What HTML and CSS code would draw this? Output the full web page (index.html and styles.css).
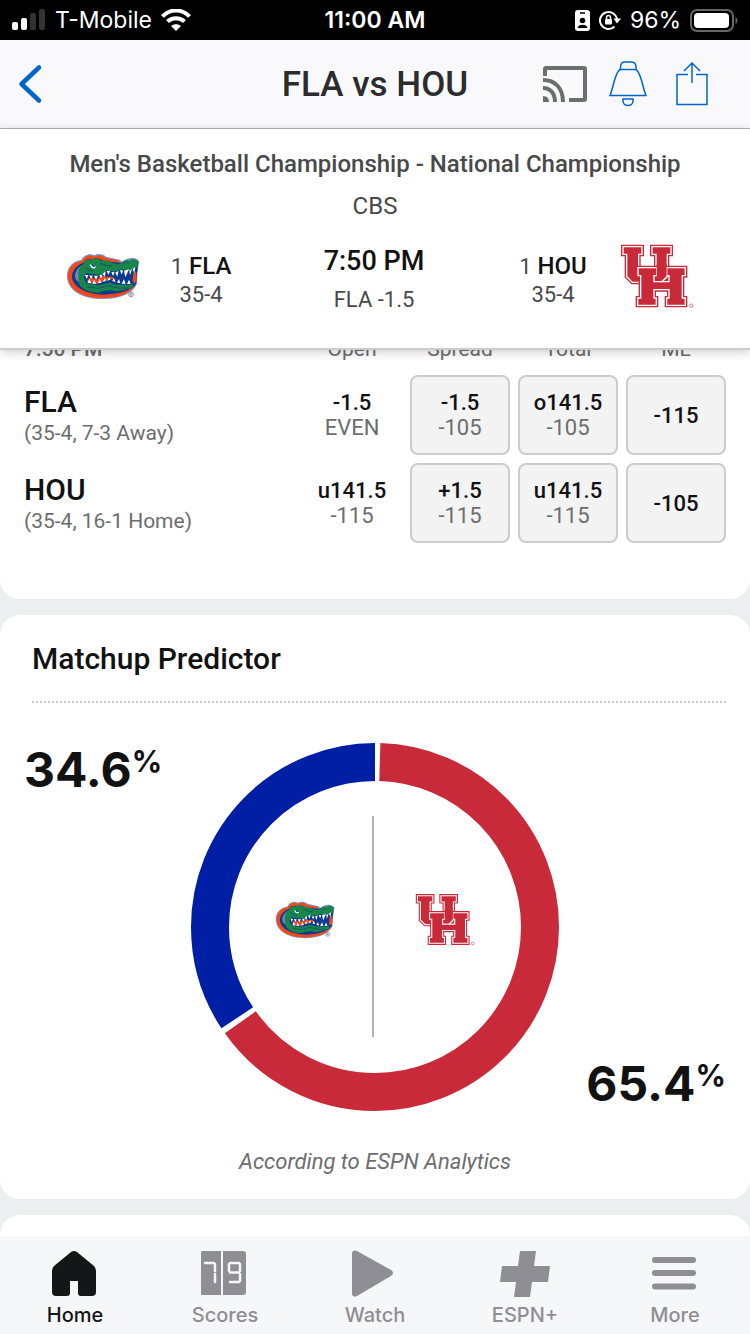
FILE: index.html
```html
<!DOCTYPE html>
<html lang="en">
<head>
    <meta charset="UTF-8">
    <meta name="viewport" content="width=device-width, initial-scale=1.0">
    <title>FLA vs HOU</title>
    <link rel="stylesheet" href="styles.css">
</head>
<body>
    <!-- shared logos -->
    <svg class="defs" width="0" height="0" aria-hidden="true">
        <symbol id="gators" viewBox="48 68 222 144">
            <path d="M51 142C50 112 71 94 94 92C101 77 119 70 133 78C146 71 160 75 168 82L209 91L216 97C230 86 246 82 262 90L268 97L262 128L261 163C250 190 215 209 158 209C98 209 53 184 51 142Z" fill="#7f8fbd"/>
            <path d="M54 142C53 114 74 97 96 95C103 80 119 74 133 82C146 75 159 79 167 86L208 94V100L150 98L105 103C85 112 73 124 74 144C76 169 112 192 160 193C203 194 240 184 258 164C244 191 208 206 158 206C100 206 56 182 54 142Z" fill="#fa4616"/>
            <path d="M66 143C66 122 82 105 102 100C104 91 117 86 127 91C140 83 152 88 160 95L208 100L265 95L258 165C236 187 207 195 160 196C106 195 68 172 66 143Z" fill="#0b3a92"/>
            <path d="M75 144C74 128 83 115 96 108L87 130L90 160C81 156 76 151 75 144Z" fill="#6f86bb"/>
            <path d="M85 134C84 118 92 108 102 103C103 92 114 87 124 93C133 84 146 85 152 94L167 93C181 97 192 105 209 104C221 96 228 88 239 94C246 86 258 88 264 97L263 112L237 124L215 120L192 127L170 123L156 137L125 134L108 131L101 143L110 163L146 168L178 160L200 166L238 166L250 160L247 172C233 182 217 182 198 186C178 180 160 184 145 190C117 189 92 179 86 160Z" fill="#188646"/>
            <path d="M118 105L138 111L134 118L124 115Z" fill="#fff"/>
            <path d="M125 105L137 111L133 113L126 111Z" fill="#0b3a92"/>
            <path d="M106 137L124 137L158 140L175 127L192 131L212 125L235 129L254 116L256 163L240 165L217 162L199 159L178 152L147 163L114 163L103 150Z" fill="#0b3a92"/>
            <path d="M110 153L125 143L139 151L153 139L170 142L187 142L199 153L183 148L159 156L143 163L119 161Z" fill="#fa4616"/>
            <path d="M250 132L259 128V156L252 163L248 154Z" fill="#fa4616"/>
            <path d="M105 136L115 138L110 149ZM118 138L128 139L123 150ZM132 139L144 139L138 151ZM148 138L157 136L154 148ZM158 134L167 126L165 142ZM170 125L180 124L176 137ZM184 128L194 129L189 140ZM196 130L206 124L202 142ZM210 123L219 123L215 136ZM222 124L237 120L226 144ZM238 124L246 119L240 138ZM248 118L256 113L253 133ZM112 161L118 148L124 162ZM127 163L132 151L139 163ZM144 162L149 149L155 160ZM158 157L165 145L168 155ZM171 154L178 143L182 151ZM187 155L191 146L197 158ZM201 160L207 149L211 162ZM215 163L222 150L227 164ZM231 163L237 151L242 164Z" fill="#fff"/>
            <path d="M150 102C163 105 174 111 187 111M218 103C226 98 233 98 238 103M113 173L146 177L176 169L205 176L235 176M104 113L114 121L129 124" fill="none" stroke="#0b3a92" stroke-width="2"/>
            <circle cx="243" cy="195" r="7" fill="none" stroke="#8591ad" stroke-width="3"/>
            <path d="M241 199V192H245V195H241L245 199" fill="none" stroke="#7180a0" stroke-width="2"/>
        </symbol>
        <symbol id="cougars" viewBox="360 42 222 196">
            <g stroke-miterlimit="8">
                <path d="M371 54H424V73H414V142L420 150H462L470 142V73H458V54H511V73H500V140L484 157H398L382 141V73H371Z" fill="#c92a39" stroke="#c92a39" stroke-width="16"/>
                <path d="M371 54H424V73H414V142L420 150H462L470 142V73H458V54H511V73H500V140L484 157H398L382 141V73H371Z" fill="#c92a39" stroke="#fff" stroke-width="8"/>
                <path d="M371 54H424V73H414V142L420 150H462L470 142V73H458V54H511V73H500V140L484 157H398L382 141V73H371Z" fill="#c92a39"/>
                <path d="M416 117H468V137H460V159H509V137H502V117H554V137H545V208H554V226H502V208H509V179H460V208H467V226H415V208H424V137H416Z" fill="#c92a39" stroke="#c92a39" stroke-width="16"/>
                <path d="M416 117H468V137H460V159H509V137H502V117H554V137H545V208H554V226H502V208H509V179H460V208H467V226H415V208H424V137H416Z" fill="#c92a39" stroke="#fff" stroke-width="8"/>
                <path d="M416 117H468V137H460V159H509V137H502V117H554V137H545V208H554V226H502V208H509V179H460V208H467V226H415V208H424V137H416Z" fill="#c92a39"/>
                <!-- right stem of the U in front of the H -->
                <path d="M470 104H500V138L484 154H472L478 140H470Z" fill="#c92a39"/>
                <path d="M504 139L484 159" stroke="#fff" stroke-width="4"/>
            </g>
            <circle cx="574" cy="229" r="5" fill="none" stroke="#d5707a" stroke-width="3"/>
        </symbol>
    </svg>

    <div class="status-bar">
        <div class="status-left">
            <svg width="34" height="22" viewBox="0 0 34 22">
                <rect x="0" y="13" width="6" height="8" rx="2" fill="#fff"/>
                <rect x="9" y="9" width="6" height="12" rx="2" fill="#fff"/>
                <rect x="18" y="4" width="6" height="17" rx="2" fill="#333"/>
                <rect x="27" y="0" width="6" height="21" rx="2" fill="#333"/>
            </svg>
            <span>T-Mobile</span>
            <svg width="30" height="22" viewBox="0 0 30 22">
                <path d="M1.500 7.500C9-.5 21-.5 28.500 7.500M6.500 12.500C11 8 19 8 23.500 12.500" fill="none" stroke="#fff" stroke-width="4"/>
                <path d="M15 22L10 17C13 14.500 17 14.500 20 17Z" fill="#fff"/>
            </svg>
        </div>
        <div class="status-time">11:00 AM</div>
        <div class="status-right">
            <svg width="15" height="21" viewBox="0 0 15 21">
                <rect width="15" height="21" rx="3" fill="#fff"/>
                <path d="M5 3H10" stroke="#000" stroke-width="1.500"/>
                <circle cx="7.500" cy="10.500" r="2.800"/>
                <path d="M2.500 18C3 13.500 12 13.500 12.500 18Z"/>
            </svg>
            <svg width="22" height="20" viewBox="0 0 22 20">
                <path d="M15.500 16.500A8.500 8.500 0 1 1 18 10" fill="none" stroke="#fff" stroke-width="2"/>
                <path d="M14.500 8.500H22L18 13.500Z" fill="#fff"/>
                <rect x="6" y="9" width="7" height="5.500" rx="1" fill="#fff"/>
                <path d="M7.500 9V7.500A2 2 0 0 1 11.500 7.500V9" fill="none" stroke="#fff" stroke-width="1.500"/>
            </svg>
            <span>96%</span>
            <svg width="48" height="23" viewBox="0 0 48 23">
                <rect x="1" y="1" width="42" height="21" rx="6" fill="none" stroke="#666" stroke-width="2"/>
                <rect x="4" y="4" width="35" height="15" rx="4" fill="#fff"/>
                <path d="M45.500 8C48 9 48 14 45.500 15Z" fill="#666"/>
            </svg>
        </div>
    </div>

    <header class="nav">
        <div class="nav-back">
            <button class="icon-button" aria-label="Back">
                <svg width="26" height="42" viewBox="0 0 26 42"><path d="M21 4.500L3.500 21L21 37.500" fill="none" stroke="#06c" stroke-width="4.500" stroke-linecap="round" stroke-linejoin="round"/></svg>
            </button>
        </div>
        <h1>FLA vs HOU</h1>
        <div class="nav-actions">
            <button class="icon-button" aria-label="Cast">
                <svg width="44" height="44" viewBox="0 0 44 44">
                    <path d="M2 14V7Q2 6 3 6H41Q42 6 42 7V37Q42 38 41 38H26M0 18C12 18 20 26 20 40M0 26C7 26 12 31 12 40" fill="none" stroke="#6c6d6f" stroke-width="4"/>
                    <path d="M0 34Q6 34 6 40H0Z" fill="#6c6d6f"/>
                </svg>
            </button>
            <button class="icon-button" aria-label="Alerts">
                <svg width="38" height="46" viewBox="0 0 38 46">
                    <path d="M11 8.500H27C32 11 34 28 37 34.500H1C4 28 6 11 11 8.500ZM11.500 8.500V6Q11.500 1 16 1H22Q27 1 27 6V8.500M14 38H24V40C24 46 14 46 14 40Z" fill="none" stroke="#06c" stroke-width="1.500"/>
                </svg>
            </button>
            <button class="icon-button" aria-label="Share">
                <svg width="40" height="46" viewBox="-6 1 40 46">
                    <path d="M13 14.500H2V44.500H32V14.500H21M17 23V3M9 11L17 3L25 11" fill="none" stroke="#06c" stroke-width="1.500"/>
                </svg>
            </button>
        </div>
    </header>

    <section class="scoreboard">
        <p class="event">Men's Basketball Championship - National Championship</p>
        <p class="network">CBS</p>
        <div class="teams">
            <svg class="logo" role="img" aria-label="Florida Gators"><use href="#gators"/></svg>
            <div class="team">
                <p><span class="rank">1</span> <b>FLA</b></p>
                <p class="record">35-4</p>
            </div>
            <div class="kickoff">
                <p class="time">7:50 PM</p>
                <p class="line">FLA -1.5</p>
            </div>
            <div class="team">
                <p><span class="rank">1</span> <b>HOU</b></p>
                <p class="record">35-4</p>
            </div>
            <svg class="logo" role="img" aria-label="Houston Cougars"><use href="#cougars"/></svg>
        </div>
    </section>

    <main class="feed">
        <section class="card odds-card">
            <table class="odds">
                <thead>
                    <tr>
                        <th class="odds-team">7:50 PM</th>
                        <th>Open</th>
                        <th>Spread</th>
                        <th>Total</th>
                        <th>ML</th>
                    </tr>
                </thead>
                <tbody>
                    <tr>
                        <td class="odds-team"><b>FLA</b><span>(35-4, 7-3 Away)</span></td>
                        <td><b>-1.5</b><span>EVEN</span></td>
                        <td><button><b>-1.5</b><span>-105</span></button></td>
                        <td><button><b>o141.5</b><span>-105</span></button></td>
                        <td><button><b>-115</b></button></td>
                    </tr>
                    <tr>
                        <td class="odds-team"><b>HOU</b><span>(35-4, 16-1 Home)</span></td>
                        <td><b>u141.5</b><span>-115</span></td>
                        <td><button><b>+1.5</b><span>-115</span></button></td>
                        <td><button><b>u141.5</b><span>-115</span></button></td>
                        <td><button><b>-105</b></button></td>
                    </tr>
                </tbody>
            </table>
        </section>

        <section class="card predictor">
            <h2>Matchup Predictor</h2>
            <div class="predictor-body">
                <p class="chance">34.6<sup>%</sup></p>
                <svg class="donut" viewBox="0 0 368 368" role="img" aria-label="FLA 34.6%, HOU 65.4%">
                    <g fill="none" stroke-width="38" transform="rotate(-90 184 184)">
                        <circle cx="184" cy="184" r="165" pathLength="360" stroke="#c92a39" stroke-dasharray="233 127" stroke-dashoffset="-1.700"/>
                        <circle cx="184" cy="184" r="165" pathLength="360" stroke="#001fa5" stroke-dasharray="123.400 236.600" stroke-dashoffset="-236.600"/>
                    </g>
                    <path d="M182 73V294" stroke="#b2b3b5" stroke-width="2"/>
                    <use href="#gators" x="84" y="157" width="60" height="39"/>
                    <use href="#cougars" x="224" y="150" width="60" height="53"/>
                </svg>
                <p class="chance chance-home">65.4<sup>%</sup></p>
            </div>
            <p class="credit">According to ESPN Analytics</p>
        </section>

        <section class="card next-card"></section>
    </main>

    <nav class="tab-bar">
        <a href="#home" class="active">
            <svg width="48" height="48" viewBox="1 0 48 48"><path d="M21 2Q24 0 27 2L44 16Q46 18 46 21V42Q46 46 42 46H31Q28 46 28 43V31H20V43Q20 46 17 46H6Q2 46 2 42V21Q2 18 4 16Z" fill="currentColor"/></svg>
            Home
        </a>
        <a href="#scores">
            <svg width="48" height="48" viewBox="2 0 48 48">
                <path d="M4 1H22V45H4Q1 45 1 42V4Q1 1 4 1ZM24 1H44Q47 1 47 4V42Q47 45 44 45H24Z" fill="currentColor"/>
                <path d="M6 13H15M16 14V21M16 24V32M31 13H40M30 14V21M41 14V21M31 22.500H40M41 24V31M31 32H40" fill="none" stroke="#f6f7f9" stroke-width="2.500" stroke-linecap="round"/>
            </svg>
            Scores
        </a>
        <a href="#watch">
            <svg width="48" height="48" viewBox="1 0 48 48"><path d="M2 4Q2-1 7 1L41 20Q45 23 41 26L7 46Q2 48 2 43Z" fill="currentColor"/></svg>
            Watch
        </a>
        <a href="#espn-plus">
            <svg width="50" height="48" viewBox="0 0 50 48"><path d="M20 1H36L34 16H50L48 32H32L30 47H14L16 32H0L2 16H18Z" fill="currentColor"/></svg>
            ESPN+
        </a>
        <a href="#more">
            <svg width="48" height="48" viewBox="0 0 48 48"><path d="M4 10H42M4 23H42M4 36.500H42" stroke="currentColor" stroke-width="6" stroke-linecap="round"/></svg>
            More
        </a>
    </nav>
</body>
</html>
```
FILE: styles.css
```css
* {
    box-sizing: border-box;
}

body {
    margin: 0;
    height: 100vh;
    display: flex;
    flex-direction: column;
    overflow: hidden;
    font-family: Roboto, Arial, sans-serif;
    color: #121213;
    background: #edeef0;
}

h1, h2, p {
    margin: 0;
}

b {
    font-weight: 500;
}

button {
    font: inherit;
    color: inherit;
    cursor: pointer;
}

.defs {
    position: absolute;
}

/* phone status bar */
.status-bar {
    display: grid;
    grid-template-columns: 1fr auto 1fr;
    align-items: center;
    height: 40px;
    flex: none;
    padding: 0 12px;
    background: #000;
    color: #fff;
    font-family: Inter, sans-serif;
    font-size: 23px;
}

.status-left,
.status-right {
    display: flex;
    align-items: center;
    gap: 9px;
}

.status-right {
    justify-content: flex-end;
}

.status-time {
    font-weight: 600;
}

/* title bar */
.nav {
    display: grid;
    grid-template-columns: 1fr auto 1fr;
    align-items: center;
    height: 89px;
    flex: none;
    background: #f9f9fb;
    border-bottom: 1px solid #b2b3b5;
}

.nav h1 {
    font-size: 35px;
    font-weight: 500;
    color: #2b2c2d;
}

.nav-back {
    padding-left: 18px;
}

.nav-actions {
    display: flex;
    justify-content: flex-end;
    gap: 22px;
    padding-right: 41px;
}

.icon-button {
    display: flex;
    align-items: center;
    padding: 0;
    border: none;
    background: none;
}

/* game summary */
.scoreboard {
    position: relative;
    z-index: 1;
    flex: none;
    height: 221px;
    padding-top: 20px;
    background: #fff;
    border-bottom: 2px solid #ccc;
    box-shadow: 0 2px 10px rgba(0, 0, 0, .2);
    text-align: center;
    color: #48494a;
}

.event {
    font-size: 24px;
    line-height: 30px;
    font-weight: 500;
}

.network {
    margin-top: 12px;
    font-size: 24px;
    line-height: 30px;
}

.teams {
    display: grid;
    grid-template-columns: 74px 122px 1fr 134px 74px;
    align-items: center;
    padding: 15px 56px 0 66px;
}

.logo {
    width: 74px;
    height: 68px;
}

.team,
.kickoff {
    padding-top: 8px;
}

.team {
    font-size: 24px;
    line-height: 28px;
}

.team b,
.time {
    color: #121213;
}

.rank,
.record {
    font-size: 22px;
}

.time {
    font-size: 27px;
    line-height: 34px;
    font-weight: 500;
}

.line {
    margin-top: 6px;
    font-size: 22px;
    line-height: 32px;
}

/* scrolling cards */
.feed {
    flex: 1;
    min-height: 0;
    overflow: hidden;
    display: flex;
    flex-direction: column;
    gap: 16px;
}

.card {
    flex: none;
    background: #fff;
    border-radius: 20px;
}

.odds-card {
    margin-top: -21px;
    padding: 0 16px 48px;
}

.odds {
    width: 100%;
    table-layout: fixed;
    border-spacing: 8px;
    text-align: center;
    color: #6c6d6f;
}

.odds th {
    width: 100px;
    height: 30px;
    padding: 0 0 6px;
    font-size: 21px;
    line-height: 24px;
    font-weight: 400;
}

.odds td {
    height: 80px;
    padding: 0;
}

.odds .odds-team {
    width: auto;
    text-align: left;
}

.odds th.odds-team {
    font-weight: 500;
}

.odds b,
.odds span {
    display: block;
    font-size: 22px;
    line-height: 25px;
}

.odds b {
    color: #121213;
}

.odds .odds-team b {
    padding-top: 4px;
    font-size: 30px;
    line-height: 32px;
}

.odds .odds-team span {
    font-size: 21px;
    line-height: 30px;
}

.odds button {
    width: 100%;
    height: 80px;
    padding: 0;
    background: #f3f3f3;
    border: 2px solid #ccc;
    border-radius: 8px;
}

.predictor {
    padding: 24px 24px 22px;
}

.predictor h2 {
    margin-left: 8px;
    padding-bottom: 22px;
    border-bottom: 2px dotted #ccc;
    font-size: 30px;
    line-height: 40px;
    font-weight: 500;
}

.predictor-body {
    display: grid;
    grid-template-columns: 1fr 368px 1fr;
    margin-top: 40px;
}

.donut {
    width: 100%;
}

.chance {
    font-family: Inter, sans-serif;
    font-size: 48px;
    line-height: 54px;
    font-weight: 700;
}

.chance sup {
    font-size: 30px;
    line-height: 30px;
    vertical-align: 15px;
}

.chance-home {
    align-self: end;
    text-align: right;
}

.credit {
    margin-top: 36px;
    text-align: center;
    font-size: 22px;
    line-height: 30px;
    font-style: italic;
    color: #6c6d6f;
}

.next-card {
    height: 60px;
}

/* bottom tabs */
.tab-bar {
    display: grid;
    grid-template-columns: repeat(5, 1fr);
    flex: none;
    height: 98px;
    padding-top: 14px;
    background: #f6f7f9;
    font-family: Inter, sans-serif;
}

.tab-bar a {
    display: flex;
    flex-direction: column;
    align-items: center;
    gap: 4px;
    font-size: 20px;
    line-height: 26px;
    font-weight: 500;
    text-decoration: none;
    color: #8f8e94;
}

.tab-bar .active {
    color: #151618;
}
```
